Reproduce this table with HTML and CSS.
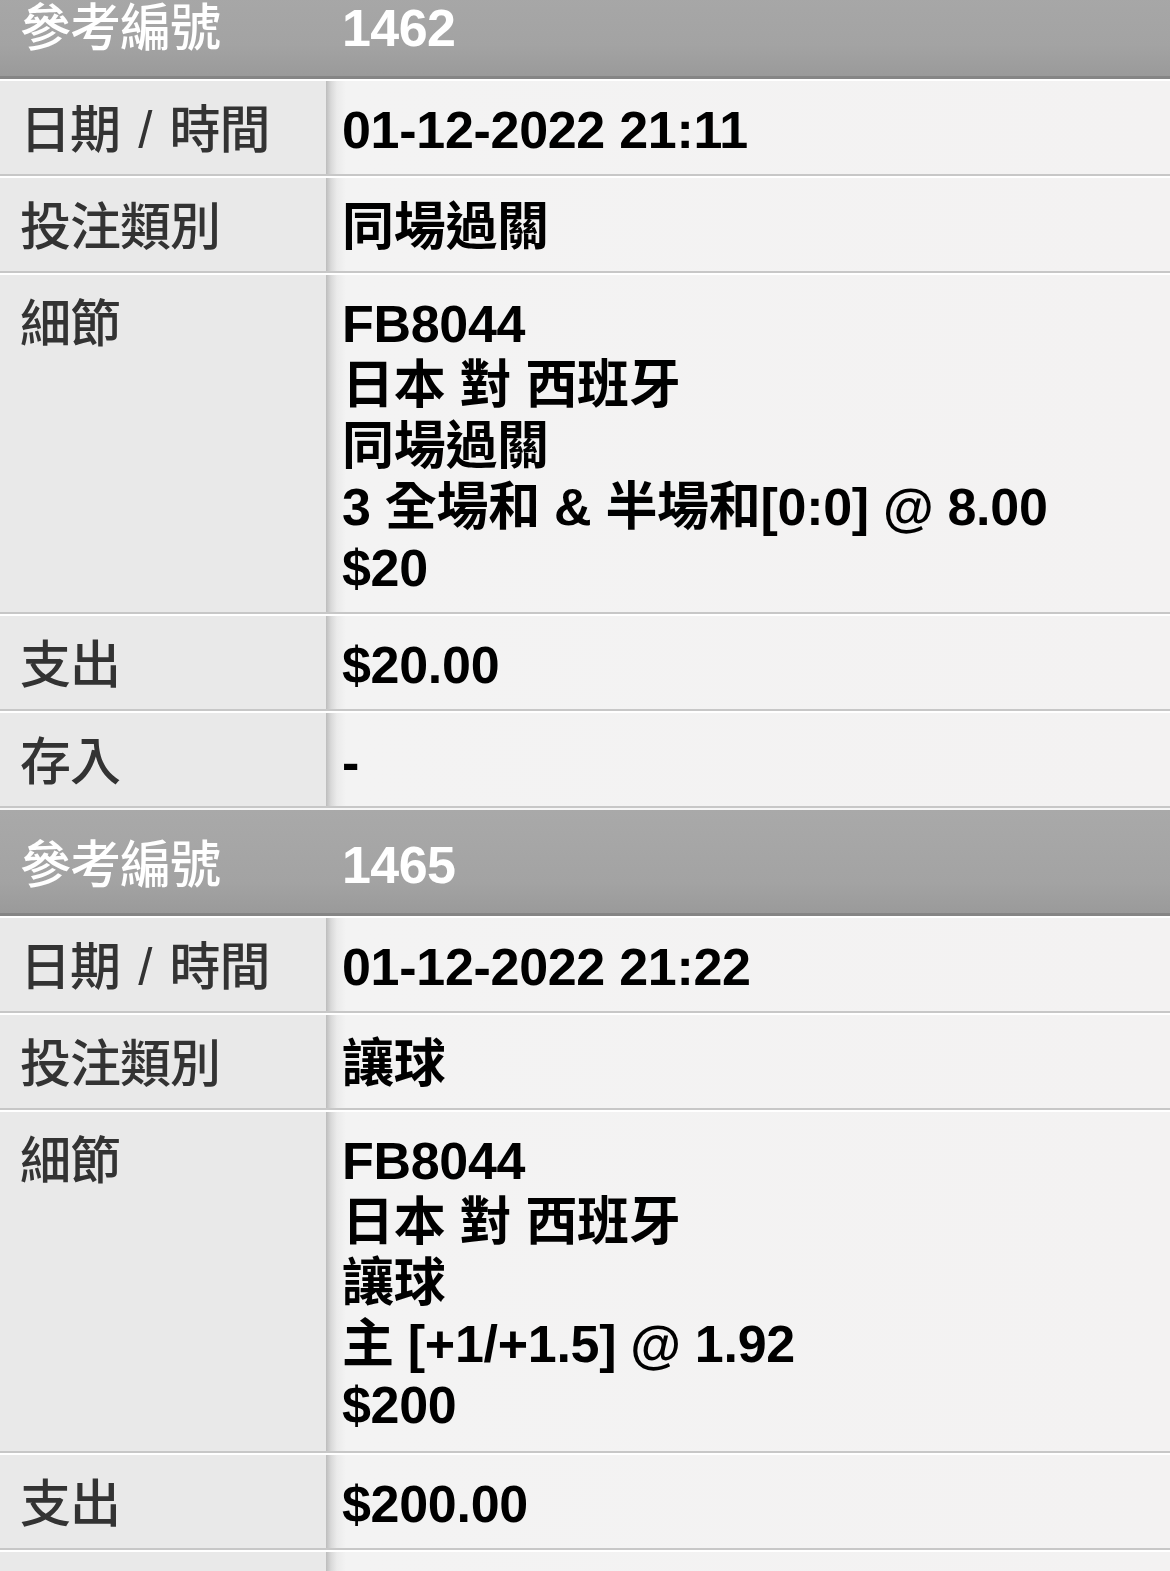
FILE: index.html
```html
<!DOCTYPE html>
<html lang="zh-Hant">
<head>
<meta charset="utf-8">
<title>投注紀錄</title>
<link rel="stylesheet" href="styles.css">
</head>
<body>
<div class="list">
  <section class="record">
    <div class="head"><div class="head-label">參考編號</div><div class="head-value">1462</div></div>
    <div class="row"><div class="label">日期 / 時間</div><div class="value">01-12-2022 21:11</div></div>
    <div class="row"><div class="label">投注類別</div><div class="value">同場過關</div></div>
    <div class="row row-detail"><div class="label">細節</div><div class="value">FB8044<br>日本 對 西班牙<br>同場過關<br>3 全場和 &amp; 半場和[0:0] @ 8.00<br>$20</div></div>
    <div class="row"><div class="label">支出</div><div class="value">$20.00</div></div>
    <div class="row"><div class="label">存入</div><div class="value">-</div></div>
  </section>
  <section class="record">
    <div class="head"><div class="head-label">參考編號</div><div class="head-value">1465</div></div>
    <div class="row"><div class="label">日期 / 時間</div><div class="value">01-12-2022 21:22</div></div>
    <div class="row"><div class="label">投注類別</div><div class="value">讓球</div></div>
    <div class="row row-detail row-detail2"><div class="label">細節</div><div class="value">FB8044<br>日本 對 西班牙<br>讓球<br>主 [+1/+1.5] @ 1.92<br>$200</div></div>
    <div class="row"><div class="label">支出</div><div class="value">$200.00</div></div>
    <div class="row"><div class="label">存入</div><div class="value">-</div></div>
  </section>
</div>
</body>
</html>
```
FILE: styles.css
```css
html, body {
  margin: 0;
  padding: 0;
  background: #f2f2f2;
}
body {
  font-family: "Liberation Sans", "Noto Sans CJK TC", "Noto Sans CJK SC", sans-serif;
  overflow: hidden;
}
.list {
  margin-top: -29px;
  width: 1170px;
}
.head {
  display: grid;
  grid-template-columns: 326px 1fr;
  border-top: 2px solid #f6f6f6;
  border-bottom: 3px solid #858585;
  background: linear-gradient(#a9a9a9, #a3a3a3 70%, #9a9a9a);
  padding: 25px 0 17px;
  height: 61px;
  color: #fff;
  line-height: 61px;
}
.head-label {
  padding-left: 20px;
  font-size: 51px;
  font-weight: 500;
  letter-spacing: -1px;
}
.head-value {
  padding-left: 16px;
  font-size: 52px;
  font-weight: 700;
  letter-spacing: -0.6px;
}
.row {
  display: grid;
  grid-template-columns: 326px 1fr;
  border-top: 2px solid #ffffff;
  border-bottom: 2px solid #c7c7c7;
  line-height: 61px;
}
.label {
  background: #e9e9e9;
  color: #333;
  font-size: 51px;
  font-weight: 500;
  letter-spacing: -1px;
  word-spacing: 5px;
  padding: 19px 0 13px 20px;
}
.value {
  background: linear-gradient(to right, #bdbdbd 0, #d9d9d9 5px, #ebebeb 11px, #f3f3f3 20px, #f3f2f2 100%);
  color: #000;
  font-size: 52px;
  font-weight: 700;
  letter-spacing: -0.3px;
  padding: 19px 0 13px 16px;
  white-space: nowrap;
}
.row-detail .label,
.row-detail .value {
  padding-top: 19px;
  padding-bottom: 13px;
}
.row-detail2 .label,
.row-detail2 .value {
  padding-bottom: 15px;
}
```
